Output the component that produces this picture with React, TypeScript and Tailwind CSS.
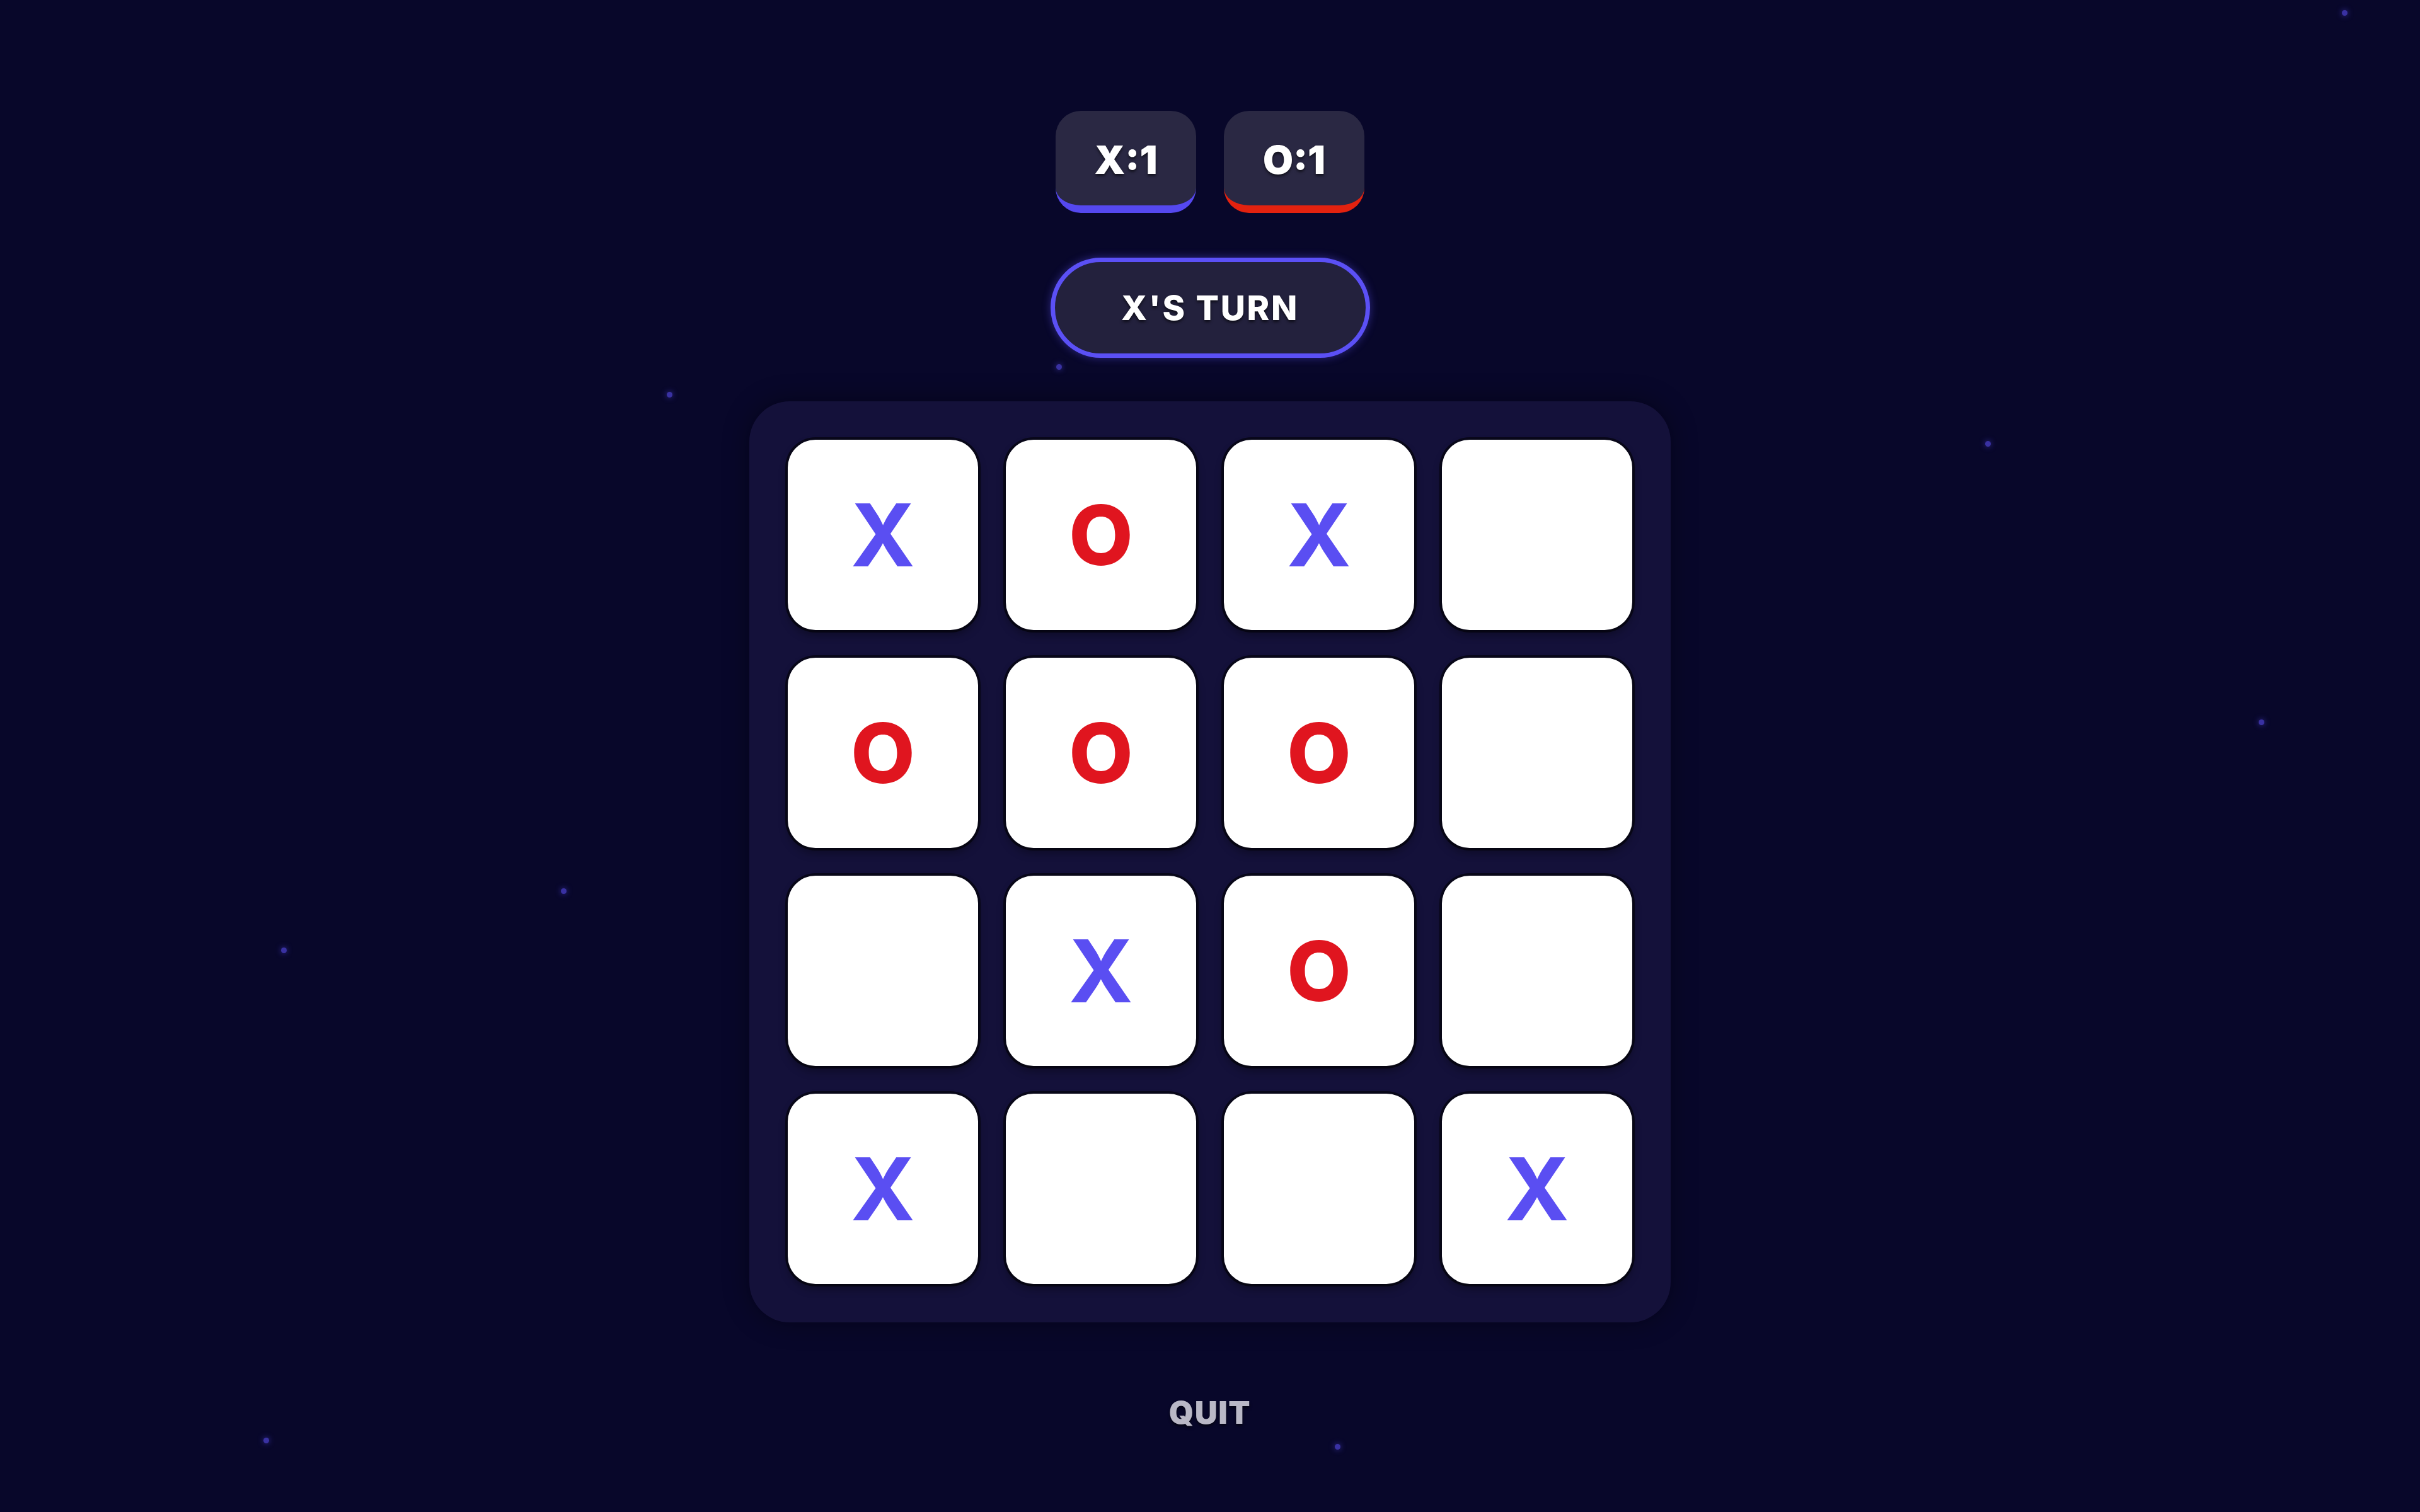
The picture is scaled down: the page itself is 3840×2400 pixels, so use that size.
import React from 'react';

type Mark = 'X' | 'O' | '';

const board: Mark[] = [
  'X', 'O', 'X', '',
  'O', 'O', 'O', '',
  '', 'X', 'O', '',
  'X', '', '', 'X',
];

const dots = [
  'left-[1058px] top-[622px]',
  'left-[1676px] top-[578px]',
  'left-[3584px] top-[1142px]',
  'left-[3716px] top-[16px]',
  'left-[2118px] top-[2292px]',
  'left-[446px] top-[1504px]',
  'left-[418px] top-[2282px]',
  'left-[3150px] top-[700px]',
  'left-[890px] top-[1410px]',
];

const Cell = ({ mark }: { mark: Mark }) => (
  <button className="flex h-[302px] w-[302px] items-center justify-center rounded-[44px] bg-white shadow-[0_0_0_4px_rgba(0,0,0,0.55),0_8px_14px_rgba(0,0,0,0.35)]">
    {mark === 'X' && <span className="text-[138px] font-bold leading-none text-[#5a4ef2]">X</span>}
    {mark === 'O' && <span className="text-[132px] font-extrabold leading-none text-[#e0151f]">O</span>}
  </button>
);

const App = () => {
  return (
    <div className="relative flex min-h-screen flex-col items-center overflow-hidden bg-[#08072a] pt-[176px] font-['Inter','Noto_Sans',sans-serif] text-white">
      {/* faint glowing dots in the background */}
      {dots.map((d) => (
        <span key={d} className={`absolute h-[9px] w-[9px] rounded-full bg-[#5a4ef2] opacity-60 shadow-[0_0_10px_#5a4ef2] ${d}`} />
      ))}

      <div className="flex gap-[44px]">
        <div className="flex h-[162px] w-[223px] items-center justify-center rounded-[40px] border-b-[12px] border-[#5548f0] bg-[#2a2843] pt-[4px] text-[62px] font-black [text-shadow:0_3px_4px_rgba(0,0,0,0.6)]">
          X:1
        </div>
        <div className="flex h-[162px] w-[223px] items-center justify-center rounded-[40px] border-b-[12px] border-[#e3220f] bg-[#2a2843] pt-[4px] text-[62px] font-black [text-shadow:0_3px_4px_rgba(0,0,0,0.6)]">
          O:1
        </div>
      </div>

      <div className="mt-[71px] flex h-[159px] w-[507px] items-center justify-center rounded-full border-[7px] border-[#5b50f5] bg-[#23213d] text-[54px] font-extrabold tracking-[0.05em] shadow-[0_0_14px_rgba(91,80,245,0.45)] [text-shadow:0_3px_4px_rgba(0,0,0,0.6)]">
        X'S TURN
      </div>

      <div className="mt-[69px] grid grid-cols-4 gap-[44px] rounded-[64px] bg-[#14113a] p-[61px] shadow-[0_0_40px_rgba(0,0,0,0.4)]">
        {board.map((m, i) => (
          <Cell key={i} mark={m} />
        ))}
      </div>

      <button className="mt-[106px] text-[50px] font-black tracking-[0.03em] text-[#b9b8c6] [text-shadow:0_3px_4px_rgba(0,0,0,0.6)]">
        QUIT
      </button>
    </div>
  );
};

export default App;
